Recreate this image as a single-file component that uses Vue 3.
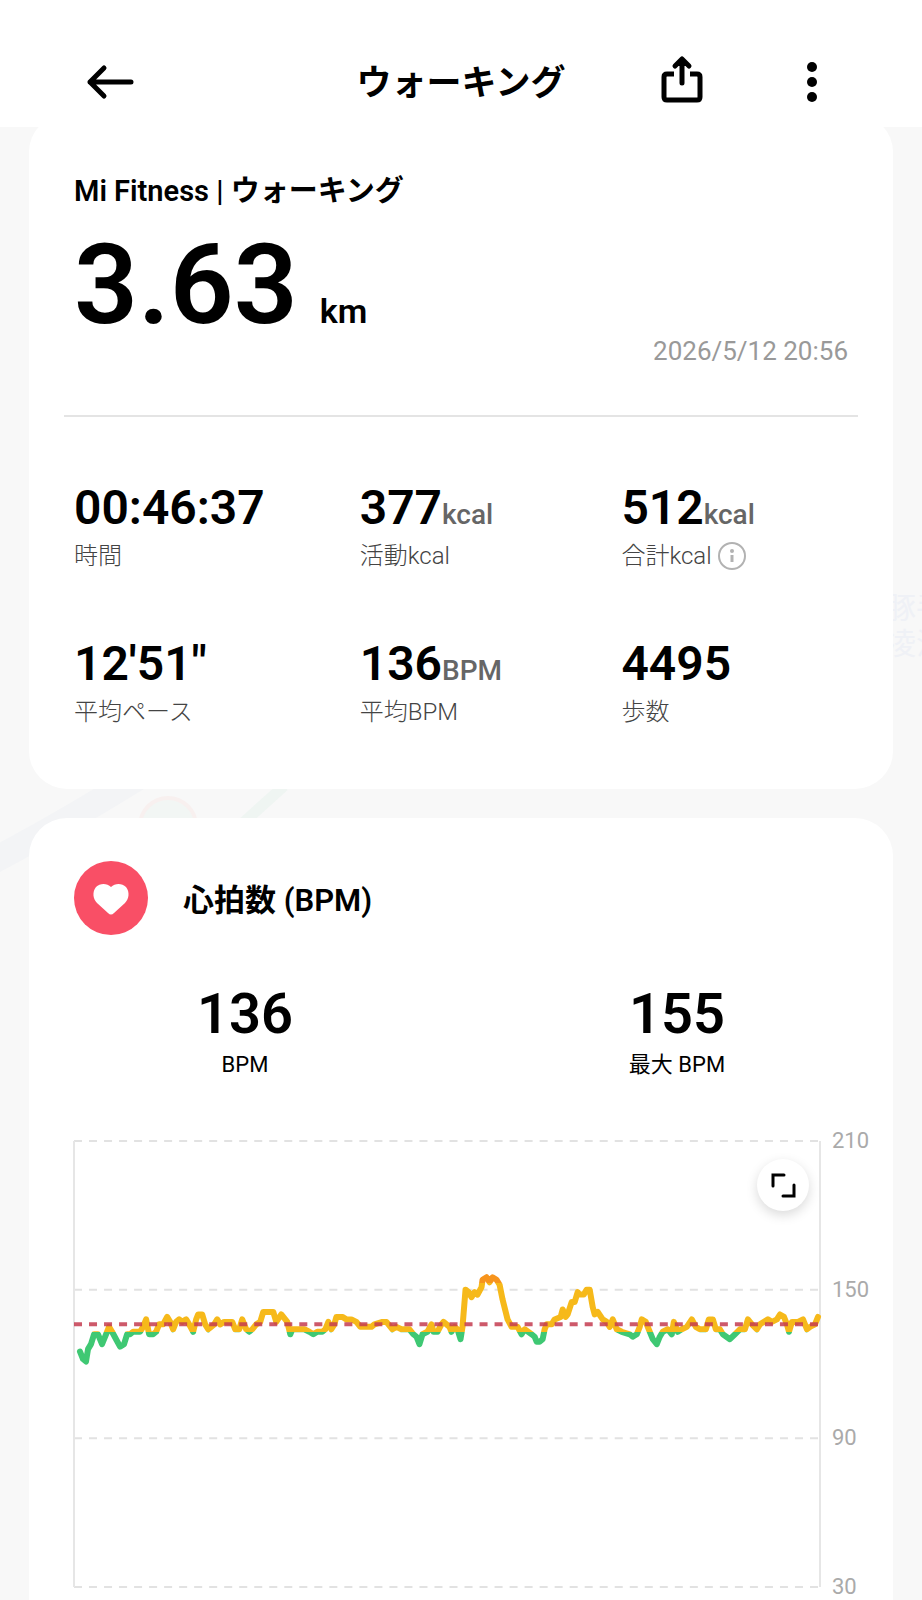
<template>
  <div class="workout-page">
    <svg class="map" viewBox="0 0 922 1600" preserveAspectRatio="xMidYMin slice" aria-hidden="true">
      <path d="M-20 868 Q60 826 150 770" fill="none" stroke="#f3f4f6" stroke-width="26" />
      <circle cx="168" cy="826" r="28" fill="#f2f6f4" stroke="#f8f0ef" stroke-width="4" />
      <path d="M244 822 L284 786" stroke="#eff5f2" stroke-width="11" />
      <text x="886" y="618">豚手</text>
      <text x="886" y="654">凌江</text>
    </svg>

    <header class="top-bar">
      <button type="button" class="icon-button" aria-label="戻る">
        <svg width="90" height="90" viewBox="0 0 90 90">
          <path d="M25 45 H66 M39 31 L25 45 L39 59" />
        </svg>
      </button>
      <h1>ウォーキング</h1>
      <div class="actions">
        <button type="button" class="icon-button" aria-label="共有">
          <svg width="90" height="90" viewBox="0 0 90 90">
            <path d="M37 37 H30 Q27 37 27 40 V60 Q27 63 30 63 H60 Q63 63 63 60 V40 Q63 37 60 37 H53" stroke-linecap="butt" />
            <path d="M45 46 V24 M38 29 L45 22 L52 29" />
            <path d="M45 20 L52 29 H38 Z" class="solid" />
          </svg>
        </button>
        <button type="button" class="icon-button" aria-label="メニュー">
          <svg width="90" height="90" viewBox="0 0 90 90">
            <circle cx="45" cy="30" r="5" class="solid" />
            <circle cx="45" cy="45" r="5" class="solid" />
            <circle cx="45" cy="60" r="5" class="solid" />
          </svg>
        </button>
      </div>
    </header>

    <main>
      <section class="card summary">
        <div class="overview">
          <h2>Mi Fitness | ウォーキング</h2>
          <p class="distance">3.63<span>km</span></p>
          <time datetime="2026-05-12T20:56">2026/5/12 20:56</time>
        </div>

        <dl class="stats">
          <div v-for="stat in stats" :key="stat.label" class="stat">
            <dd>{{ stat.value }}<span v-if="stat.unit">{{ stat.unit }}</span></dd>
            <dt>
              {{ stat.label }}
              <button v-if="stat.info" type="button" class="info-button" aria-label="詳細">
                <svg width="28" height="28" viewBox="0 0 28 28">
                  <circle cx="14" cy="14" r="13" fill="none" stroke="#b2b2b2" stroke-width="2" />
                  <circle cx="14" cy="9" r="2" fill="#b2b2b2" />
                  <path d="M14 13 V20" stroke="#b2b2b2" stroke-width="3" />
                </svg>
              </button>
            </dt>
          </div>
        </dl>
      </section>

      <section class="card heart">
        <div class="heart-title">
          <svg width="74" height="74" viewBox="0 0 74 74" aria-hidden="true">
            <circle cx="37" cy="37" r="37" fill="#f94f66" />
            <path
              d="M37 26 C33 22 26 22 22 26 C18 31 19 38 23 42 L34 52 Q37 55 40 52 L51 42 C55 38 56 31 52 26 C48 22 41 22 37 26 Z"
              fill="#fff"
            />
          </svg>
          <h2>心拍数 (BPM)</h2>
        </div>

        <dl class="averages">
          <div>
            <dd>136</dd>
            <dt>BPM</dt>
          </div>
          <div>
            <dd>155</dd>
            <dt>最大 BPM</dt>
          </div>
        </dl>

        <div class="chart">
          <div class="plot">
            <svg :viewBox="`0 0 ${plotWidth} ${plotHeight}`" preserveAspectRatio="none" role="img" aria-label="心拍数">
              <defs>
                <linearGradient id="zones" gradientUnits="userSpaceOnUse" x1="0" y1="0" x2="0" :y2="plotHeight">
                  <stop :offset="zoneOffset(152.5)" stop-color="#f7941d" />
                  <stop :offset="zoneOffset(152.5)" stop-color="#f6b91a" />
                  <stop :offset="zoneOffset(133)" stop-color="#f6b91a" />
                  <stop :offset="zoneOffset(133)" stop-color="#3fc873" />
                </linearGradient>
              </defs>
              <line v-for="tick in ticks" :key="tick" x1="0" :x2="plotWidth" :y1="toY(tick)" :y2="toY(tick)" class="grid-line" />
              <line x1="0" x2="0" y1="0" :y2="plotHeight" class="axis-line" />
              <line :x1="plotWidth" :x2="plotWidth" y1="0" :y2="plotHeight" class="axis-line" />
              <polyline :points="linePoints" class="heart-line" />
              <line x1="0" :x2="plotWidth" :y1="toY(136)" :y2="toY(136)" class="average-line" />
            </svg>
            <button type="button" class="expand-button" aria-label="拡大">
              <svg width="52" height="52" viewBox="0 0 52 52">
                <path d="M16 27 V16 H27 M37 26 V37 H26" />
              </svg>
            </button>
          </div>
          <div class="scale">
            <span v-for="tick in ticks" :key="tick">{{ tick }}</span>
          </div>
        </div>
      </section>
    </main>
  </div>
</template>

<script setup>
import { computed } from 'vue'

const stats = [
  { value: '00:46:37', label: '時間' },
  { value: '377', unit: 'kcal', label: '活動kcal' },
  { value: '512', unit: 'kcal', label: '合計kcal', info: true },
  { value: '12\'51"', label: '平均ペース' },
  { value: '136', unit: 'BPM', label: '平均BPM' },
  { value: '4495', label: '歩数' }
]

const plotWidth = 745
const plotHeight = 446
const ticks = [210, 150, 90, 30]

// [x, bpm]
const samples = [
  [6, 125], [9, 122], [12, 121], [14, 126], [17, 128], [20, 132], [24, 132], [28, 128], [32, 132], [35, 135],
  [38, 133], [42, 130], [46, 127], [50, 128], [53, 132], [56, 132], [59, 133], [62, 133], [66, 133], [69, 135],
  [72, 138], [75, 132], [79, 132], [82, 133], [85, 136], [89, 136], [93, 139], [96, 137], [99, 134], [102, 137],
  [105, 138], [108, 137], [112, 138], [115, 136], [119, 133], [122, 138], [124, 140], [128, 140], [131, 136],
  [134, 134], [137, 135], [140, 136], [143, 138], [146, 136], [150, 137], [158, 137], [161, 134], [165, 134],
  [168, 138], [172, 134], [175, 133], [178, 134], [182, 136], [186, 137], [189, 141], [199, 141], [202, 137],
  [207, 140], [211, 138], [213, 137], [216, 132], [218, 134], [223, 134], [230, 134], [235, 133], [239, 132],
  [243, 133], [248, 133], [251, 134], [254, 137], [257, 134], [260, 136], [262, 139], [268, 139], [272, 138],
  [277, 138], [282, 137], [286, 135], [297, 135], [300, 136], [308, 137], [312, 137], [316, 135], [318, 134],
  [322, 135], [327, 134], [335, 134], [339, 132], [342, 131], [345, 128], [348, 132], [353, 133], [357, 136],
  [359, 133], [363, 133], [367, 136], [369, 137], [372, 136], [375, 135], [377, 133], [380, 135], [383, 134],
  [386, 130], [388, 135], [391, 150], [394, 149], [397, 147], [400, 149], [403, 148], [407, 151], [408, 154],
  [412, 155], [415, 153], [418, 155], [422, 154], [425, 152], [428, 146], [433, 138], [437, 135], [443, 135],
  [447, 132], [450, 134], [457, 132], [460, 131], [462, 129], [465, 129], [468, 130], [470, 134], [472, 136],
  [477, 136], [480, 138], [486, 139], [488, 142], [491, 139], [493, 140], [497, 145], [500, 145], [503, 149],
  [505, 148], [509, 148], [512, 150], [515, 150], [518, 143], [520, 140], [523, 141], [528, 138], [532, 137],
  [535, 135], [538, 138], [542, 134], [547, 133], [555, 132], [558, 131], [562, 132], [565, 135], [567, 138],
  [571, 137], [574, 134], [578, 130], [582, 128], [585, 131], [588, 133], [593, 134], [597, 132], [599, 137],
  [603, 133], [607, 134], [612, 135], [617, 138], [621, 135], [625, 134], [631, 134], [634, 138], [638, 138],
  [641, 134], [645, 134], [648, 132], [655, 130], [660, 132], [665, 134], [670, 134], [673, 138], [677, 136],
  [682, 134], [685, 136], [693, 138], [697, 137], [702, 138], [705, 140], [709, 139], [712, 136], [714, 133],
  [717, 137], [723, 137], [728, 138], [732, 134], [735, 135], [740, 136], [743, 139]
]

const toY = (bpm) => ((210 - bpm) / 180) * plotHeight
const zoneOffset = (bpm) => (210 - bpm) / 180
const linePoints = computed(() => samples.map(([x, bpm]) => `${x},${toY(bpm)}`).join(' '))
</script>

<style>
body {
  margin: 0;
  background: #f8f8f8;
}
</style>

<style scoped>
.workout-page {
  position: relative;
  display: flex;
  flex-direction: column;
  min-height: 100vh;
  color: #000;
  background: #f8f8f8;
  font-family: Roboto, "Noto Sans CJK JP", sans-serif;
}

h1,
h2,
p,
dl,
dd {
  margin: 0;
}

button {
  padding: 0;
  border: none;
  background: transparent;
  cursor: pointer;
}

svg {
  display: block;
}

.map {
  position: absolute;
  inset: 0;
  width: 100%;
  height: 100%;
  fill: #eff1f6;
  font-size: 30px;
}

.top-bar {
  position: relative;
  z-index: 1;
  display: grid;
  grid-template-columns: 1fr auto 1fr;
  align-items: center;
  padding: 37px 65px 0;
  background: #fff;
}

.top-bar h1 {
  padding-top: 4px;
  font-size: 35px;
  line-height: 48px;
  font-weight: 700;
}

.actions {
  display: flex;
  justify-content: flex-end;
  gap: 40px;
}

.icon-button svg {
  fill: none;
  stroke: #000;
  stroke-width: 5;
  stroke-linecap: round;
  stroke-linejoin: round;
}

.icon-button .solid {
  fill: #000;
  stroke: none;
}

main {
  position: relative;
  display: flex;
  flex: 1;
  flex-direction: column;
  gap: 29px;
  margin-top: -13px;
  padding: 0 29px;
}

.card {
  border-radius: 38px;
  background: #fff;
}

.summary {
  padding: 59px 35px 61px;
}

.overview {
  padding: 0 10px 48px;
  border-bottom: 2px solid #e4e4e4;
}

.overview h2 {
  font-size: 29px;
  line-height: 36px;
  font-weight: 600;
}

.distance {
  display: flex;
  align-items: baseline;
  gap: 22px;
  margin-top: 26px;
  font-size: 112px;
  line-height: 100px;
  font-weight: 600;
}

.distance span {
  font-size: 34px;
  line-height: 40px;
}

.overview time {
  display: block;
  color: #999;
  font-size: 26px;
  line-height: 32px;
  text-align: right;
}

.stats {
  display: grid;
  grid-template-columns: 285fr 261fr 226fr;
  row-gap: 68px;
  padding: 67px 10px 0;
}

.stat {
  display: flex;
  flex-direction: column;
}

.stat dd {
  display: flex;
  align-items: baseline;
  font-size: 48px;
  line-height: 48px;
  font-weight: 600;
}

.stat dd span {
  color: #666;
  font-size: 28px;
  line-height: 32px;
  font-weight: 500;
}

.stat dt {
  display: flex;
  align-items: center;
  gap: 6px;
  margin-top: 8px;
  color: #444;
  font-size: 24px;
  line-height: 32px;
  font-weight: 300;
}

.heart {
  flex: 1;
  padding-top: 43px;
  border-radius: 38px 38px 0 0;
}

.heart-title {
  display: flex;
  align-items: center;
  gap: 35px;
  padding-left: 45px;
}

.heart-title h2 {
  padding-top: 6px;
  font-size: 31px;
  line-height: 40px;
  font-weight: 600;
}

.averages {
  display: grid;
  grid-template-columns: repeat(2, 1fr);
  margin-top: 50px;
  text-align: center;
}

.averages div {
  display: flex;
  flex-direction: column;
}

.averages dd {
  font-size: 56px;
  line-height: 58px;
  font-weight: 600;
}

.averages dt {
  margin-top: 6px;
  font-size: 22px;
  line-height: 32px;
}

.chart {
  display: flex;
  margin-top: 48px;
  padding-left: 45px;
}

.plot {
  position: relative;
  flex: 1;
  padding: 12px 0;
}

.plot > svg {
  width: 100%;
  height: 446px;
  overflow: visible;
}

.grid-line {
  stroke: #e2e2e2;
  stroke-width: 2;
  stroke-dasharray: 8 7;
}

.axis-line {
  stroke: #e6e6e6;
  stroke-width: 2;
}

.heart-line {
  fill: none;
  stroke: url(#zones);
  stroke-width: 6;
  stroke-linecap: round;
  stroke-linejoin: round;
}

.average-line {
  stroke: #c43c50;
  stroke-opacity: 0.85;
  stroke-width: 4;
  stroke-dasharray: 8 7;
}

.expand-button {
  position: absolute;
  top: 30px;
  right: 11px;
  border-radius: 50%;
  background: #fff;
  box-shadow: 0 4px 12px rgba(0, 0, 0, 0.15);
}

.expand-button svg {
  fill: none;
  stroke: #000;
  stroke-width: 3;
  stroke-linecap: round;
}

.scale {
  display: flex;
  flex-direction: column;
  justify-content: space-between;
  width: 61px;
  padding-left: 12px;
  color: #aaa;
  font-size: 22px;
  line-height: 24px;
}
</style>
